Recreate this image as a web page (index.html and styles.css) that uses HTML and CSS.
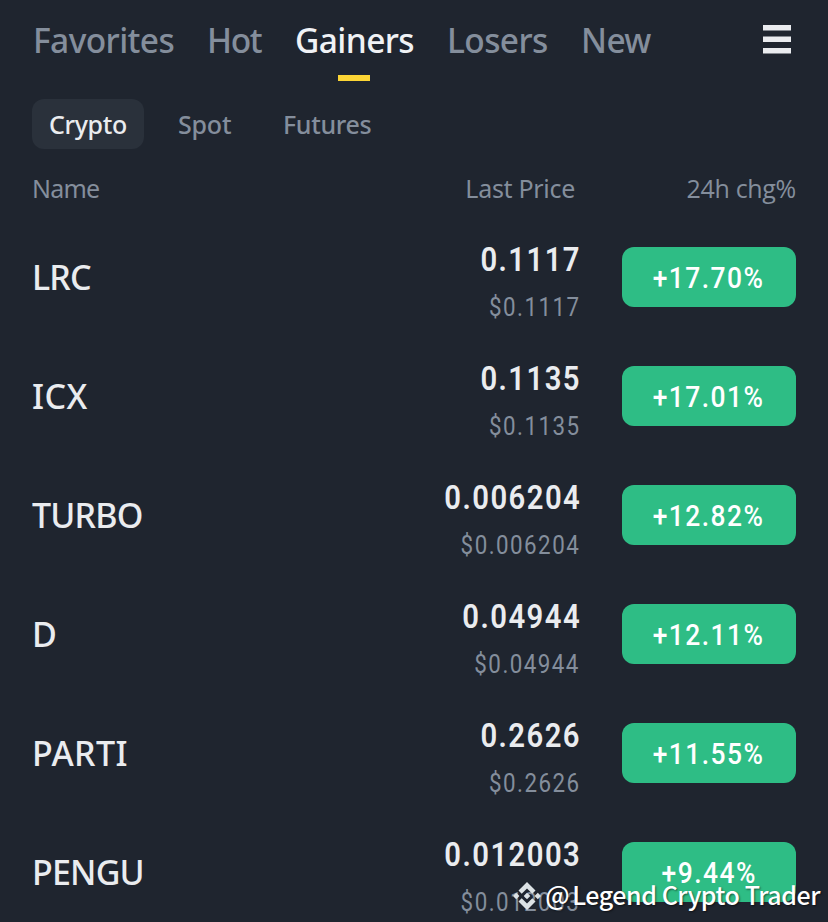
FILE: index.html
```html
<!DOCTYPE html>
<html lang="en">
<head>
<meta charset="utf-8">
<title>Markets</title>
<link rel="stylesheet" href="styles.css">
</head>
<body>
<main class="app">
  <header class="tabs">
    <nav class="tab-list">
      <a class="tab favorites">Favorites</a>
      <a class="tab hot">Hot</a>
      <a class="tab gainers active">Gainers</a>
      <a class="tab losers">Losers</a>
      <a class="tab new">New</a>
    </nav>
    <svg class="menu" viewBox="0 0 28 29" aria-label="Menu"><path fill="currentColor" d="M0 0h28v5.500H0zM0 11.500h28v5.500H0zM0 23h28v5.500H0z"/></svg>
  </header>
  <nav class="filters">
    <a class="filter crypto selected">Crypto</a>
    <a class="filter spot">Spot</a>
    <a class="filter futures">Futures</a>
  </nav>
  <div class="columns"><span class="col-name">Name</span><span class="col-price">Last Price</span><span class="col-change">24h chg%</span></div>
  <section class="list">
    <div class="row"><span class="name">LRC</span><div class="quote"><span class="price">0.1117</span><span class="fiat">$0.1117</span></div><div class="change"><span class="pct">+17.70%</span></div></div>
    <div class="row"><span class="name wide">ICX</span><div class="quote"><span class="price">0.1135</span><span class="fiat">$0.1135</span></div><div class="change"><span class="pct">+17.01%</span></div></div>
    <div class="row"><span class="name">TURBO</span><div class="quote"><span class="price">0.006204</span><span class="fiat">$0.006204</span></div><div class="change"><span class="pct">+12.82%</span></div></div>
    <div class="row"><span class="name">D</span><div class="quote"><span class="price">0.04944</span><span class="fiat">$0.04944</span></div><div class="change"><span class="pct">+12.11%</span></div></div>
    <div class="row"><span class="name wide">PARTI</span><div class="quote"><span class="price">0.2626</span><span class="fiat">$0.2626</span></div><div class="change"><span class="pct">+11.55%</span></div></div>
    <div class="row"><span class="name">PENGU</span><div class="quote"><span class="price">0.012003</span><span class="fiat">$0.012003</span></div><div class="change"><span class="pct">+9.44%</span></div></div>
  </section>
  <div class="credit">
    <svg class="logo" viewBox="0 0 28 28" aria-hidden="true"><path fill="currentColor" d="M14 0l8.500 8.500-3.200 3.200L14 6.400l-5.300 5.300-3.200-3.200zM14 28l8.500-8.500-3.200-3.200-5.300 5.300-5.300-5.300-3.200 3.200zM14 10.700l3.300 3.300-3.300 3.300-3.300-3.300zM3.200 10.800L6.400 14l-3.200 3.200L0 14zM24.800 10.800L28 14l-3.200 3.200-3.200-3.200z"/></svg>
    <span class="handle"><span class="at">@</span>Legend Crypto Trader</span>
  </div>
</main>
</body>
</html>
```
FILE: styles.css
```css
* { box-sizing: border-box; }
body { margin: 0; background: #1f252f; overflow: hidden; }
.app {
  position: relative;
  width: 828px;
  height: 922px;
  overflow: hidden;
  background: #1f252f;
  color: #eaecef;
  font-family: "Noto Sans", sans-serif;
  white-space: nowrap;
}
.tabs { display: flex; justify-content: space-between; height: 81px; padding: 0 37px 0 33px; }
.tab-list { display: flex; }
.tab {
  position: relative;
  font-size: 33.500px;
  font-weight: 500;
  letter-spacing: -0.600px;
  line-height: 80px;
  color: #848e9c;
}
.favorites { width: 174px; }
.hot { width: 88px; letter-spacing: -1.400px; }
.gainers { width: 152px; }
.losers { width: 134px; }
.active { color: #f0f2f5; }
.active::after {
  content: "";
  position: absolute;
  left: 43px;
  top: 75px;
  width: 32px;
  height: 6px;
  background: #fcd535;
}
.menu { width: 28px; height: 29px; margin-top: 25px; color: #eaecef; }
.filters { display: flex; height: 50.500px; margin-top: 17.500px; padding-left: 32px; }
.filter { font-size: 25px; font-weight: 500; letter-spacing: -0.350px; line-height: 51px; color: #848e9c; }
.crypto { width: 112px; padding-left: 17px; border-radius: 12px; }
.spot { width: 139px; padding-left: 34px; letter-spacing: -0.200px; }
.selected { background: #2a313b; color: #eaecef; }
.columns {
  display: grid;
  grid-template-columns: 1fr 110px 221px;
  height: 68px;
  padding: 0 32px;
  font-size: 25px;
  letter-spacing: -0.300px;
  line-height: 79px;
  color: #848e9c;
}
.col-name { letter-spacing: -0.800px; }
.col-price, .col-change { justify-self: end; }
.col-change { font-family: "Open Sans", sans-serif; }
.row {
  display: grid;
  grid-template-columns: 1fr 200px 174px;
  align-items: center;
  height: 119px;
  padding: 0 32px 0 32px;
}
.name { font-size: 34px; font-weight: 500; letter-spacing: -0.800px; line-height: 60px; padding-top: 1px; }
.wide { letter-spacing: 0.400px; }
.quote { display: flex; flex-direction: column; align-items: flex-end; padding-top: 14px; padding-right: 41px; font-family: Roboto, sans-serif; }
.price { font-size: 34px; font-weight: 600; letter-spacing: 1.700px; line-height: 47px; transform: scaleX(.86); transform-origin: right; }
.fiat { font-size: 26px; letter-spacing: 1.700px; line-height: 48px; padding-right: 1px; color: #848e9c; transform: scaleX(.86); transform-origin: right; }
.change {
  display: flex;
  justify-content: center;
  height: 60px;
  border-radius: 12px;
  background: #2ebd85;
  color: #fff;
  font: 500 30px/62px Roboto, sans-serif;
}
.pct { letter-spacing: 1.700px; transform: scaleX(.88); }
.credit {
  position: absolute;
  right: 8px;
  bottom: 8px;
  display: flex;
  align-items: center;
  height: 36px;
  color: #fff;
  font: 500 25px/34px "Noto Sans CJK SC", sans-serif;
  letter-spacing: -0.450px;
  text-shadow: 1px 1px 2px #0008;
}
.logo { width: 28px; height: 28px; margin-right: 4px; color: #dce2e5; }
.at { margin-right: 3px; }
.handle { padding-bottom: 4px; }
```
